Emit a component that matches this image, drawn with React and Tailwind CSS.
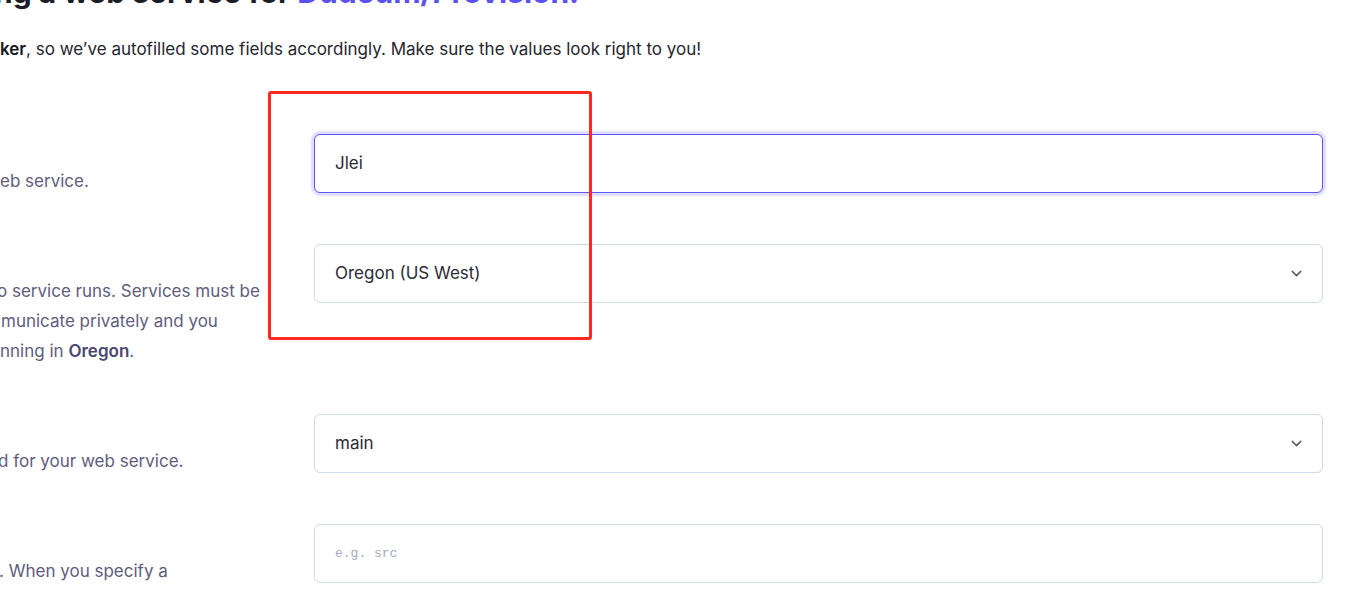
import React from "react";
import { ChevronDown } from "lucide-react";

const font = { fontFamily: "Inter, 'Noto Sans', sans-serif" };

function Row({ lines, children }) {
  return (
    <div className="flex items-start">
      <div className="w-[265px] shrink-0 overflow-hidden pt-[32px] text-[17px] leading-[30px] text-[#5f5c7e]">
        {lines.map((l, i) => (
          <div key={i} className={"whitespace-nowrap " + (l.cls || "")}>
            {l.node}
          </div>
        ))}
      </div>
      <div className="ml-[49px] w-[1009px] shrink-0">{children}</div>
    </div>
  );
}

function Select({ value }) {
  return (
    <div className="flex h-[59px] items-center justify-between rounded-[6px] border border-[#cfdaeb] bg-white pl-[20px] pr-[17px] text-[17px] text-[#2b2b36]">
      <span>{value}</span>
      <ChevronDown size={17} strokeWidth={2} className="text-[#5a5a66]" />
    </div>
  );
}

export default function App() {
  return (
    <div className="relative h-[592px] w-[1367px] overflow-hidden bg-white" style={font}>
      <div className="mt-[-26px]">
        <div className="-ml-[6px] whitespace-nowrap text-[30px] font-bold leading-[36px] text-[#1d1d27]">
          ng a web service for <span className="text-[#5b51f2]">Dudeum/Provision.</span>
        </div>
        <p className="mt-[27px] whitespace-nowrap text-[17px] leading-[24px] text-[#25252f]">
          <span className="font-semibold text-[#17171f]">ker</span>, so we’ve autofilled some fields accordingly. Make sure the values look right to you!
        </p>
        <div className="mt-[73px] flex flex-col gap-[48px]">
          <Row lines={[{ node: "eb service." }]}>
            <div className="flex h-[59px] items-center rounded-[6px] border border-[#5f56ee] bg-white pl-[20px] text-[17px] text-[#2b2b36] shadow-[0_0_0_3px_rgba(99,91,255,0.12),0_0_6px_rgba(99,91,255,0.25)]">
              Jlei
            </div>
          </Row>
          <Row
            lines={[
              { node: "o service runs. Services must be", cls: "-ml-[3px]" },
              { node: "municate privately and you", cls: "ml-[1px]" },
              {
                node: (
                  <>
                    nning in <span className="font-semibold text-[#4a4770]">Oregon</span>.
                  </>
                ),
              },
            ]}
          >
            <Select value="Oregon (US West)" />
          </Row>
          <Row lines={[{ node: "d for your web service.", cls: "-ml-[2px]" }]}>
            <Select value="main" />
          </Row>
          <Row lines={[{ node: ". When you specify a", cls: "-ml-[1px]" }]}>
            <div className="flex h-[59px] items-center rounded-[6px] border border-[#cfdaeb] bg-white pl-[20px]">
              <span className="text-[13px] text-[#a3abc2]" style={{ fontFamily: "'Liberation Mono', 'DejaVu Sans Mono', monospace" }}>
                e.g. src
              </span>
            </div>
          </Row>
        </div>
      </div>
      <div className="pointer-events-none absolute left-[268px] top-[91px] h-[249px] w-[324px] rounded-[3px] border-[3px] border-[#ff2a1f]" />
    </div>
  );
}
